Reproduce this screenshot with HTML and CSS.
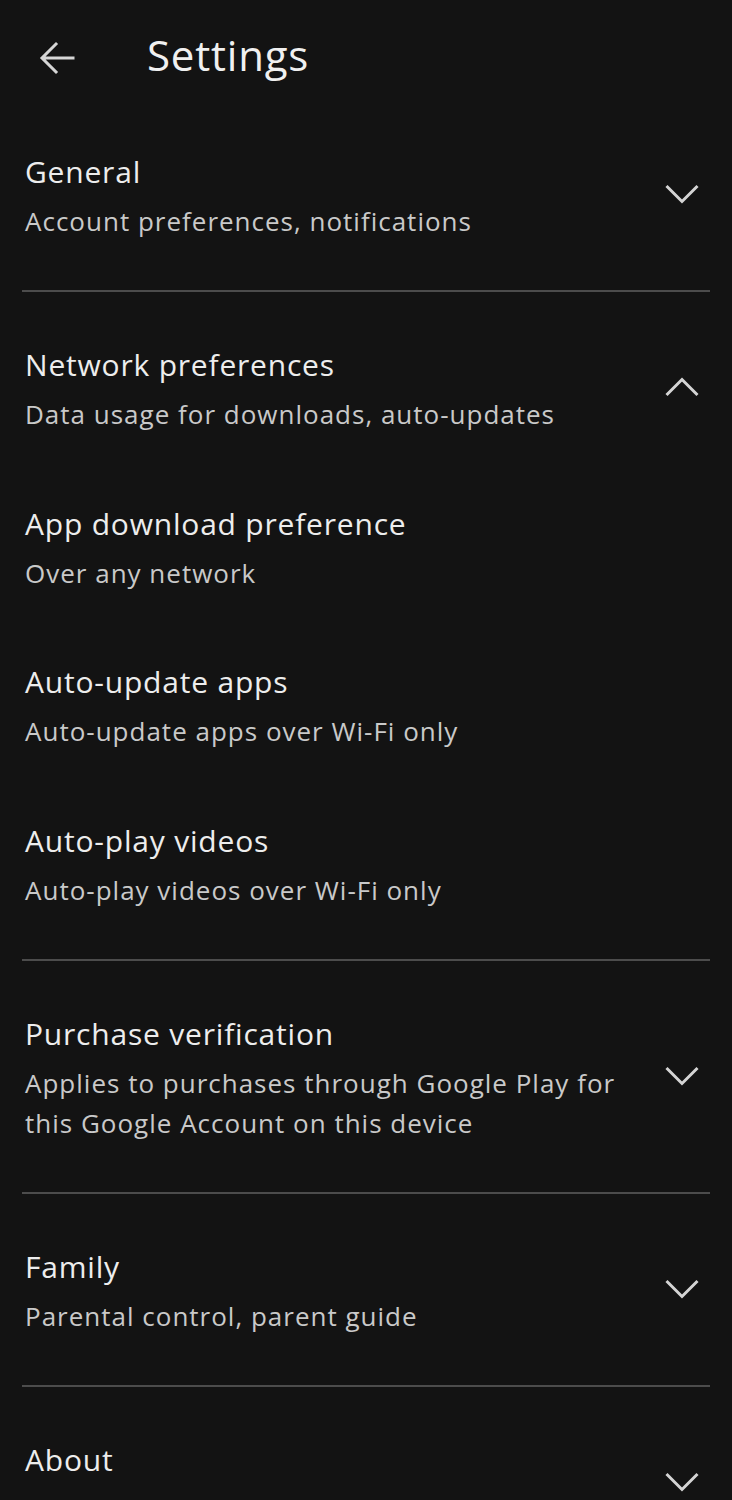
FILE: index.html
```html
<!DOCTYPE html>
<html lang="en">
<head>
<meta charset="utf-8">
<title>Settings</title>
<link rel="stylesheet" href="styles.css">
</head>
<body>
<div class="page">
  <header class="topbar">
    <span class="back">
      <svg width="36" height="36" viewBox="0 0 36 36"><path d="M34 18H4M17 4L3 18l14 14" fill="none" stroke="#d6d6d6" stroke-width="3" stroke-linecap="square"/></svg>
    </span>
    <h1 class="title">Settings</h1>
  </header>

  <section class="section">
    <div class="row">
      <div class="text">
        <div class="label">General</div>
        <div class="sub">Account preferences, notifications</div>
      </div>
      <svg class="chev" width="36" height="36" viewBox="0 0 36 36"><polyline points="2.5,10 18,25.5 33.5,10" fill="none" stroke="#d4d4d4" stroke-width="3"/></svg>
    </div>
  </section>
  <div class="divider"></div>

  <section class="section">
    <div class="row">
      <div class="text">
        <div class="label">Network preferences</div>
        <div class="sub">Data usage for downloads, auto-updates</div>
      </div>
      <svg class="chev" width="36" height="36" viewBox="0 0 36 36"><polyline points="2.5,26 18,10.5 33.5,26" fill="none" stroke="#d4d4d4" stroke-width="3"/></svg>
    </div>
    <div class="row sub-row">
      <div class="text">
        <div class="label">App download preference</div>
        <div class="sub">Over any network</div>
      </div>
    </div>
    <div class="row sub-row">
      <div class="text">
        <div class="label">Auto-update apps</div>
        <div class="sub">Auto-update apps over Wi-Fi only</div>
      </div>
    </div>
    <div class="row sub-row">
      <div class="text">
        <div class="label">Auto-play videos</div>
        <div class="sub">Auto-play videos over Wi-Fi only</div>
      </div>
    </div>
  </section>
  <div class="divider"></div>

  <section class="section">
    <div class="row">
      <div class="text">
        <div class="label">Purchase verification</div>
        <div class="sub">Applies to purchases through Google Play for this Google Account on this device</div>
      </div>
      <svg class="chev" width="36" height="36" viewBox="0 0 36 36"><polyline points="2.5,10 18,25.5 33.5,10" fill="none" stroke="#d4d4d4" stroke-width="3"/></svg>
    </div>
  </section>
  <div class="divider"></div>

  <section class="section">
    <div class="row">
      <div class="text">
        <div class="label">Family</div>
        <div class="sub">Parental control, parent guide</div>
      </div>
      <svg class="chev" width="36" height="36" viewBox="0 0 36 36"><polyline points="2.5,10 18,25.5 33.5,10" fill="none" stroke="#d4d4d4" stroke-width="3"/></svg>
    </div>
  </section>
  <div class="divider"></div>

  <section class="section">
    <div class="row">
      <div class="text">
        <div class="label">About</div>
        <div class="sub">Play Store build version, device certification</div>
      </div>
      <svg class="chev" width="36" height="36" viewBox="0 0 36 36"><polyline points="2.5,10 18,25.5 33.5,10" fill="none" stroke="#d4d4d4" stroke-width="3"/></svg>
    </div>
  </section>
</div>
</body>
</html>
```

FILE: styles.css
```css
html, body {
  margin: 0;
  padding: 0;
  background: #131313;
}
body {
  font-family: "Open Sans", Roboto, "Liberation Sans", sans-serif;
  color: #ececec;
}
.page {
  width: 732px;
  height: 1500px;
  overflow: hidden;
}
.topbar {
  height: 99px;
  display: flex;
  align-items: center;
  padding-left: 39px;
  padding-top: 16px;
  box-sizing: border-box;
}
.back {
  display: flex;
  width: 36px;
  height: 36px;
}
.title {
  margin: -6px 0 0 72px;
  font-size: 42px;
  font-weight: 400;
  letter-spacing: 0.8px;
  color: #f0f0f0;
  line-height: 50px;
}
.section {
  padding: 48px 32px 49px 25px;
  display: flex;
  flex-direction: column;
  gap: 64.67px;
}
.row {
  display: flex;
  align-items: center;
  justify-content: space-between;
  gap: 30px;
}
.text {
  flex: 1;
  min-width: 0;
}
.label {
  font-size: 30px;
  line-height: 50px;
  letter-spacing: 0.8px;
  color: #ededed;
}
.sub {
  margin-top: 4px;
  font-size: 26px;
  line-height: 40px;
  letter-spacing: 1px;
  color: #c9c9c9;
}
.chev {
  flex: none;
}
.divider {
  height: 2px;
  margin: 0 22px;
  background: #4c4c4c;
}
```
